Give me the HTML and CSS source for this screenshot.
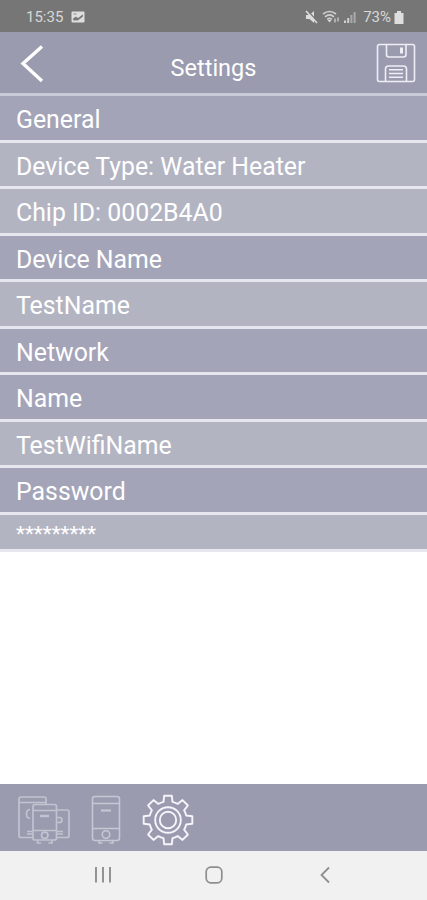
FILE: index.html
```html
<!DOCTYPE html>
<html lang="en">
<head>
  <meta charset="UTF-8" />
  <meta name="viewport" content="width=device-width, initial-scale=1.0"/>
  <title>Settings</title>
  <link rel="stylesheet" href="styles.css">
</head>
<body>

  <div class="status-bar">
    <span class="status-time">15:35</span>
    <svg class="status-picture" width="14" height="12" viewBox="0 0 14 12">
      <rect x="0.5" y="0.5" width="13" height="11" rx="1" fill="#dedede"/>
      <path d="M2.500 9V7.500L5 6l2 1.500L11.500 4v1.500L7 9zM2.500 3h3" fill="#777" stroke="#777" stroke-width="0.8"/>
    </svg>
    <div class="status-right">
      <svg width="54" height="16" viewBox="0 0 54 16">
        <path d="M1 6h3.500L9 2v12l-4.500-4H1z" fill="#dcdcdc"/>
        <path d="M2.500 1.500l10 11" stroke="#767676" stroke-width="1.300"/>
        <path d="M1 2l11 12" stroke="#dcdcdc" stroke-width="1.600"/>
        <g fill="none" stroke="#cfcfcf" stroke-width="1.700">
          <path d="M18 5q6.500-5 13 0M20 7.800q4.500-3.800 9 0M22.200 10.300q2.300-2 4.600 0"/>
          <path d="M30 9.500v4M33 8.500v4" stroke-width="1.300"/>
        </g>
        <path d="M22.500 11h4l-2 2.500z" fill="#dcdcdc"/>
        <path d="M39 11.500h2V14h-2zM42.200 9h2v5h-2z" fill="#d2d2d2"/>
        <path d="M45.400 6h2v8h-2zM48.600 3h2v11h-2z" fill="#aaa"/>
      </svg>
      <span class="status-percent">73%</span>
      <svg width="10" height="13" viewBox="0 0 10 13">
        <path d="M3 0h4v2h2.500V13H0.500V2H3z" fill="#dedede"/>
      </svg>
    </div>
  </div>

  <header class="header">
    <svg class="back-icon" width="24" height="40" viewBox="0 0 24 40">
      <path d="M22 2.500L3 19.500L22 37" fill="none" stroke="#fff" stroke-width="3.400"/>
    </svg>
    <h1 class="header-title">Settings</h1>
    <svg class="save-icon" width="40" height="40" viewBox="0 0 40 40" fill="none" stroke="#eeeef6" stroke-width="1.600">
      <rect x="1.500" y="1.500" width="37" height="37" rx="2"/>
      <path d="M10.500 1.500v10q0 2.500 2.500 2.500h14.500q2.500 0 2.500-2.500v-10"/>
      <path d="M25.500 4.500v6" stroke-width="3"/>
      <path d="M9.500 38.500V26q0-3 3-3h15q3 0 3 3v12.500M13 26.800h14M13 30.500h14M13 34.200h14"/>
    </svg>
  </header>

  <main class="settings">
    <div class="row heading">General</div>
    <div class="row">Device Type: Water Heater</div>
    <div class="row">Chip ID: 0002B4A0</div>
    <div class="row heading">Device Name</div>
    <div class="row">TestName</div>
    <div class="row heading">Network</div>
    <div class="row heading">Name</div>
    <div class="row">TestWifiName</div>
    <div class="row heading">Password</div>
    <div class="row password">*********</div>
  </main>

  <nav class="tab-bar">
    <!-- all devices -->
    <svg class="tab-devices" width="54" height="50" viewBox="0 0 54 50" fill="none" stroke="#c1c3d0" stroke-width="1.700">
      <path d="M16 42.500H4Q2 42.500 2 40.500V4q0-2 2-2H27q2 0 2 2v5M2 7.500H29M13 14.500q-3.500 0-3.500 4.500t3.500 4M10 36.500h5M10 39h5"/>
      <path d="M40 15h10q2 0 2 2v23.500q0 2-2 2H40M40 22.500h2q3 0 3 2.500t-3 2.500h-2M40 36.500h6M40 39h6"/>
      <rect x="16" y="9.500" width="23.500" height="35.500" rx="2"/>
      <path d="M16 15.500h23.500M16 35.500h23.500M20.500 45v3h3.500M31.500 48H35v-3"/>
      <path d="M23 21h9" stroke-width="2.400"/>
      <circle cx="27.700" cy="40.300" r="3.200"/>
    </svg>
    <!-- single device -->
    <svg class="tab-device" width="30" height="50" viewBox="0 0 30 50" fill="none" stroke="#c5c7d3" stroke-width="1.600">
      <rect x="1.500" y="1.500" width="27" height="44" rx="2.500"/>
      <path d="M1.500 8.500h27M1.500 33.500h27"/>
      <path d="M10 15.500h10" stroke-width="2.200"/>
      <circle cx="15" cy="39.500" r="3.800"/>
      <path d="M8 45.500v2.500h3.500M18.500 48H22v-2.500"/>
    </svg>
    <!-- settings -->
    <svg class="tab-settings" width="52" height="52" viewBox="-26 -26 52 52" fill="none" stroke="#f5f5fb" stroke-width="1.900" stroke-linejoin="round">
      <path d="M-4.500-18.200L-3.800-24.300H3.800L4.500-18.200A18.700 18.700 0 0 1 9.700-16.100L14.500-19.900L19.900-14.500L16.100-9.700A18.700 18.700 0 0 1 18.200-4.500L24.300-3.800V3.800L18.200 4.500A18.700 18.700 0 0 1 16.100 9.700L19.900 14.500L14.500 19.900L9.700 16.100A18.700 18.700 0 0 1 4.500 18.200L3.800 24.300H-3.800L-4.500 18.200A18.700 18.700 0 0 1-9.700 16.100L-14.500 19.900L-19.900 14.500L-16.100 9.700A18.700 18.700 0 0 1-18.200 4.500L-24.300 3.800V-3.800L-18.200-4.500A18.700 18.700 0 0 1-16.100-9.700L-19.900-14.500L-14.500-19.900L-9.700-16.100A18.700 18.700 0 0 1-4.500-18.200Z"/>
      <circle r="12.800"/>
      <circle r="8.200"/>
    </svg>
  </nav>

  <footer class="system-nav">
    <svg width="18" height="18" viewBox="0 0 18 18">
      <path d="M2 1v15.500M9 1v15.500M16 1v15.500" stroke="#8e8e8e" stroke-width="1.900"/>
    </svg>
    <svg width="18" height="18" viewBox="0 0 18 18">
      <rect x="1.200" y="1.200" width="15.600" height="15.600" rx="4.500" fill="none" stroke="#8e8e8e" stroke-width="1.700"/>
    </svg>
    <svg width="18" height="18" viewBox="0 0 18 18">
      <path d="M13 1.500L5.500 9l7.500 7.500" fill="none" stroke="#8e8e8e" stroke-width="1.800"/>
    </svg>
  </footer>

</body>
</html>
```

FILE: styles.css
```css
* {
  box-sizing: border-box;
  margin: 0;
  padding: 0;
}

body {
  font-family: Roboto, sans-serif;
  background-color: #fff;
  height: 900px;
  display: flex;
  flex-direction: column;
  overflow: hidden;
}

svg {
  display: block;
  flex-shrink: 0;
}

.status-bar {
  background-color: #767676;
  color: #d8d8d8;
  height: 32px;
  padding: 2px 23px 0 26px;
  display: flex;
  align-items: center;
  font-size: 15px;
}

.status-picture {
  margin-left: 8px;
}

.status-right {
  display: flex;
  align-items: center;
  margin-left: auto;
}

.status-percent {
  margin: 0 3px 0 4px;
}

.header {
  background-color: #9a9bae;
  color: white;
  height: 64px;
  padding: 0 11px 0 20px;
  border-bottom: 3px solid #c9cad8;
  display: flex;
  align-items: center;
  justify-content: space-between;
}

.back-icon {
  margin-top: 3px;
  margin-right: 7px;
}

.header-title {
  font-size: 23.5px;
  font-weight: normal;
  margin-top: 10px;
}

.save-icon {
  margin-top: 1px;
}

.row {
  background-color: #b3b4c2;
  color: white;
  height: 46.5px;
  padding-left: 16px;
  border-bottom: 3px solid #e6e6ee;
  font-size: 24.85px;
  line-height: 48px;
}

.heading {
  background-color: #a3a4b8;
}

.password {
  height: 37px;
  line-height: 39px;
  font-size: 20.7px;
}

.tab-bar {
  background-color: #9a9bae;
  height: 67px;
  margin-top: auto;
  padding: 0 17px;
  display: flex;
  align-items: center;
}

.tab-device {
  margin-left: 20px;
}

.tab-settings {
  margin-left: 21px;
  margin-top: 5px;
}

.tab-devices,
.tab-device {
  margin-top: 4px;
}

.system-nav {
  background-color: #f1f1f1;
  height: 49px;
  padding: 0 93px 2px 94px;
  display: flex;
  align-items: center;
  justify-content: space-between;
}
```
